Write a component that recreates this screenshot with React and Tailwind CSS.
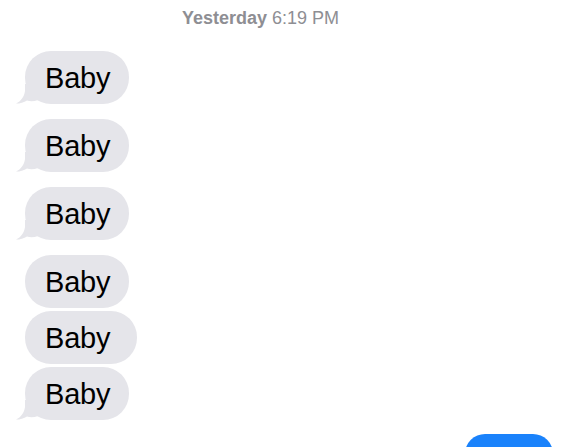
import React from 'react';

const messages = [
  { text: 'Baby', tail: true, w: 'w-[104px]', gap: 'mt-0' },
  { text: 'Baby', tail: true, w: 'w-[104px]', gap: 'mt-[15px]' },
  { text: 'Baby', tail: true, w: 'w-[104px]', gap: 'mt-[15px]' },
  { text: 'Baby', tail: false, w: 'w-[104px]', gap: 'mt-[15px]' },
  { text: 'Baby', tail: false, w: 'w-[112px]', gap: 'mt-[3px]' },
  { text: 'Baby', tail: true, w: 'w-[104px]', gap: 'mt-[3px]' },
];

function Tail() {
  return (
    <svg
      className="absolute -left-[9px] bottom-0"
      width="22"
      height="20"
      viewBox="0 0 22 20"
    >
      <path
        d="M9 0 H22 V16 C18 17.5 14 17.5 11 16.5 C8 18.5 4 19.6 0 19.6 C5 17 8 13 9 7 Z"
        fill="#e5e5ea"
      />
    </svg>
  );
}

function Bubble({ text, tail, w, gap }) {
  return (
    <div className={`relative shrink-0 ${gap} ${w} h-[53px] rounded-[26px] bg-[#e5e5ea] flex items-center pl-[20px]`}>
      {tail && <Tail />}
      <span className="relative top-[1px] text-[29px] leading-none text-black tracking-[-0.2px]">{text}</span>
    </div>
  );
}

export default function App() {
  return (
    <div
      className="relative w-[583px] h-[447px] bg-white overflow-hidden"
      style={{ fontFamily: '"Liberation Sans", Arial, sans-serif' }}
    >
      <div className="pt-[5px] h-[51px] pl-[182px] text-[18px] leading-[26px] text-[#8e8e93]">
        <span className="font-bold">Yesterday</span> 6:19 PM
      </div>
      <div className="flex flex-col pl-[25px]">
        {messages.map((m, i) => (
          <Bubble key={i} {...m} />
        ))}
      </div>
      <div className="mt-[14px] ml-[465px] w-[88px] h-[40px] rounded-[20px] bg-[#1a82fb]" />
    </div>
  );
}
